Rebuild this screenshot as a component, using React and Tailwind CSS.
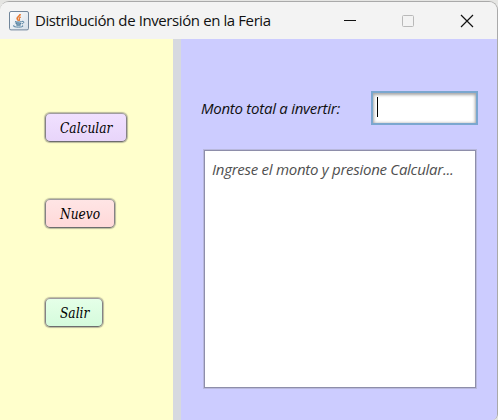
import React from "react";

function JavaIcon() {
  return (
    <svg className="ml-[9px] block shrink-0" width="20" height="20" viewBox="0 0 20 20" fill="none">
      <defs>
        <linearGradient id="tile" x1="0" y1="0" x2="1" y2="1">
          <stop offset="0" stopColor="#ffffff" />
          <stop offset="1" stopColor="#d5dfe8" />
        </linearGradient>
      </defs>
      <rect x="0.5" y="0.5" width="19" height="18.4" rx="1.5" fill="url(#tile)" stroke="#71869b" />
      <path d="M11.2 3C11.4 5 7.6 5.8 8.1 7.7C8.3 8.6 9.3 9 9.5 9.9" stroke="#e87a32" strokeWidth="1.6" />
      <path d="M11.9 5.9C10.2 6.5 9.9 7.4 10.5 8.2C11 8.9 10.3 9.4 10.1 9.9" stroke="#e87a32" strokeWidth="1.1" />
      <path d="M6 10.6C7.8 11.3 11 11.2 12.7 10.5M6.6 12.2C8.2 12.9 10.9 12.9 12.3 12.2M7.2 13.8C8.4 14.3 10.5 14.3 11.8 13.8" stroke="#53809f" strokeWidth="1.2" />
      <path d="M13 10.4C15.4 9.7 15.4 12.2 13 12.9" stroke="#53809f" />
      <path d="M5.3 14.3C2.7 15.3 6 16.1 9.5 16.1C12.8 16.1 15.3 15.3 13.4 14.5" stroke="#53809f" />
    </svg>
  );
}

function TitleBar() {
  return (
    <header className="flex h-[37px] shrink-0 items-center bg-[#f3f3f3]">
      <JavaIcon />
      <h1 className="mb-[2px] ml-[6px] w-[240px] whitespace-nowrap font-['Open_Sans','Noto_Sans',sans-serif] text-[15px] leading-5 tracking-[-0.4px] text-[#111]">
        Distribución de Inversión en la Feria
      </h1>
      <svg className="ml-[68px] block" width="132" height="14" viewBox="0 0 132 14" fill="none">
        <path d="M1 6.5H13" stroke="#111" />
        <rect x="59.5" y="1.5" width="11" height="11" rx="1" stroke="#b9b9b9" />
        <path d="M118 1L130 13M130 1L118 13" stroke="#111" strokeWidth="1.2" />
      </svg>
    </header>
  );
}

function ActionButton({ label, className }) {
  return (
    <button
      className={`flex h-[29px] items-center rounded-[5px] border border-t-[#a09ca0] border-r-[#858285] border-b-[#6d6d6d] border-l-[#858285] pt-px pl-[14px] font-['DejaVu_Serif_Condensed','DejaVu_Serif',serif] text-[14px] leading-none text-black italic shadow-[0_0_1px_1px_rgba(100,100,100,0.45)] [font-stretch:condensed] ${className}`}
    >
      <span className="origin-left scale-x-[0.97]">{label}</span>
    </button>
  );
}

export default function App() {
  return (
    <div className="h-[420px] w-[498px] overflow-hidden bg-[#e5e5e3]">
      <div className="mt-px flex h-[419px] w-[498px] flex-col overflow-hidden rounded-tl-[9px] rounded-tr-[9px] rounded-br-[6px] border-t border-r border-[#a9a9a9]">
        <TitleBar />
        <div className="flex min-h-0 flex-1">
          <aside className="flex w-[173px] shrink-0 flex-col items-start bg-[#ffffcc] pt-[74px] pl-[45px]">
            <ActionButton label="Calcular" className="w-[82px] bg-linear-to-b from-[#f0e0ff] to-[#e8d5fa]" />
            <ActionButton label="Nuevo" className="mt-[57px] w-[70px] bg-linear-to-b from-[#ffe5e5] to-[#ffd9d9]" />
            <ActionButton label="Salir" className="mt-[70px] w-[58px] bg-linear-to-b from-[#e5ffe8] to-[#d5fbdc]" />
          </aside>
          <div className="w-2 shrink-0 bg-[#d6d9df]" />
          <main className="flex-1 bg-[#ccccff] pt-[51px]">
            <div className="flex h-[35px] items-center">
              <label className="ml-[20px] w-[170px] whitespace-nowrap font-['Open_Sans','Noto_Sans',sans-serif] text-[15px] leading-5 tracking-[-0.26px] text-[#111] italic">
                Monto total a invertir:
              </label>
              <div className="flex h-[34px] w-[107px] items-center border-2 border-[#7ba7cf] bg-white pl-[4px] shadow-[inset_0_1px_3px_1px_#a8a8a8]">
                <span className="mb-px h-5 w-px bg-black" />
              </div>
            </div>
            <div className="mt-[25px] ml-[23px] h-[238px] w-[272px] border border-[#8e8eaa] bg-white pt-[8px] pl-[7px] font-['Open_Sans','Noto_Sans',sans-serif] text-[15px] leading-5 tracking-[-0.27px] whitespace-nowrap text-[#505050] italic shadow-[0_0_0_1px_#b8b8dc]">
              Ingrese el monto y presione Calcular...
            </div>
          </main>
        </div>
      </div>
    </div>
  );
}
